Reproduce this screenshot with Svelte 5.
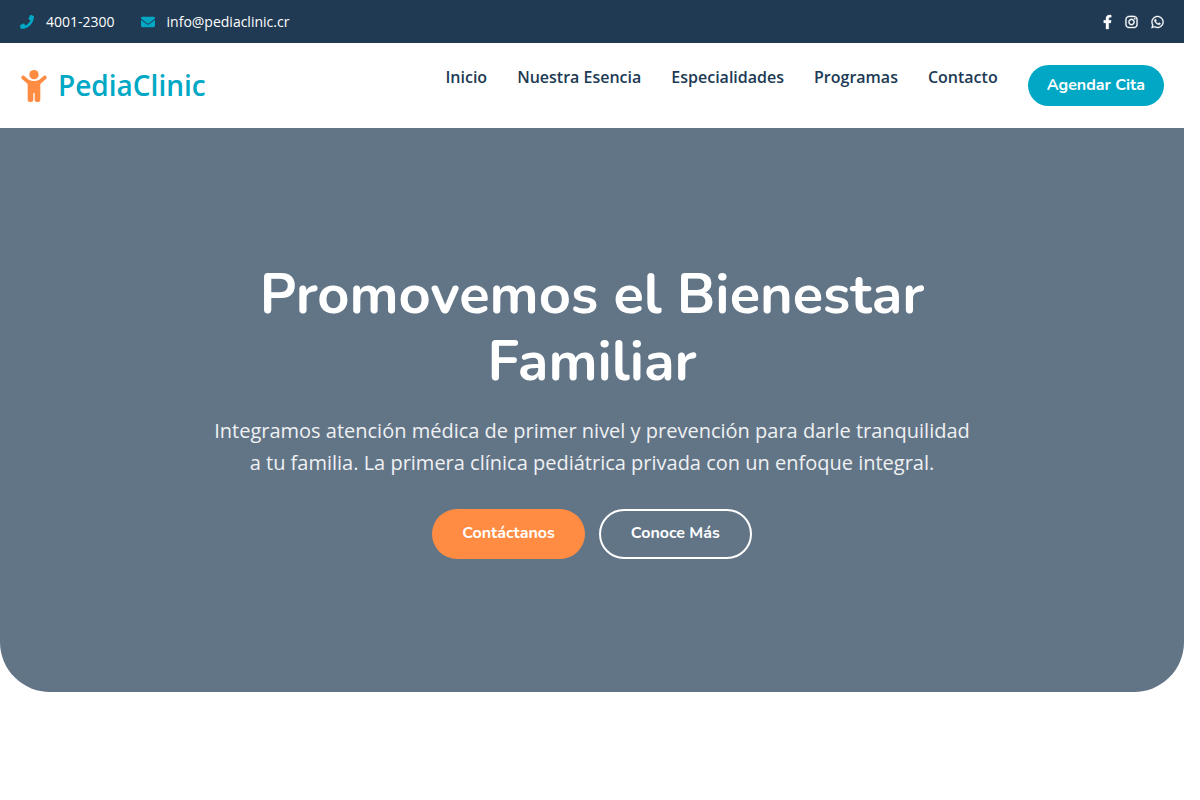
<script>
	const links = ["Inicio", "Nuestra Esencia", "Especialidades", "Programas", "Contacto"];
</script>

<div class="page">
	<div class="topBar">
		<div class="contactInfo">
			<a href="tel:40012300">
				<svg class="accent" viewBox="0 0 512 512" width="14" height="14" aria-hidden="true"><path d="M493.4 24.6l-104-24c-11.3-2.6-22.9 3.3-27.5 13.9l-48 112c-4.2 9.8-1.4 21.3 6.9 28l60.6 49.6c-36 76.7-98.9 140.5-177.2 177.2l-49.6-60.6c-6.8-8.3-18.2-11.1-28-6.9l-112 48C3.9 366.5-2 378.1.6 389.4l24 104C27.1 504.2 36.7 512 48 512c256.1 0 464-207.5 464-464 0-11.2-7.7-20.9-18.6-23.4z" /></svg>
				4001-2300
			</a>
			<a href="mailto:info@pediaclinic.cr">
				<svg class="accent" viewBox="0 0 512 512" width="14" height="14" aria-hidden="true"><path d="M48 64C21.500 64 0 85.500 0 112c0 15.100 7.100 29.300 19.200 38.400L236.800 313.600c11.400 8.500 27 8.500 38.400 0L492.800 150.400c12.100-9.100 19.200-23.300 19.200-38.400c0-26.500-21.500-48-48-48H48zM0 176V384c0 35.300 28.700 64 64 64H448c35.300 0 64-28.700 64-64V176L294.400 339.200c-22.800 17.100-54 17.100-76.800 0L0 176z" /></svg>
				info@pediaclinic.cr
			</a>
		</div>
		<div class="social">
			<a href="#facebook" aria-label="Facebook">
				<svg viewBox="0 0 320 512" width="9" height="14"><path d="M279.140 288l14.220-92.660h-88.910v-60.130c0-25.350 12.420-50.060 52.240-50.060h40.420V6.260S260.430 0 225.360 0c-73.220 0-121.080 44.380-121.080 124.720v70.620H22.890V288h81.390v224h100.170V288z" /></svg>
			</a>
			<a href="#instagram" aria-label="Instagram">
				<svg viewBox="0 0 448 512" width="13" height="14"><path d="M224.100 141c-63.600 0-114.900 51.300-114.900 114.900s51.300 114.900 114.900 114.900S339 319.500 339 255.900 287.700 141 224.100 141zm0 189.600c-41.100 0-74.700-33.500-74.700-74.700s33.500-74.700 74.700-74.700 74.700 33.500 74.700 74.700-33.600 74.700-74.700 74.700zm146.400-194.300c0 14.900-12 26.800-26.800 26.800-14.900 0-26.800-12-26.800-26.800s12-26.800 26.800-26.800 26.800 12 26.800 26.800zm76.100 27.200c-1.700-35.900-9.900-67.700-36.200-93.900-26.200-26.200-58-34.400-93.900-36.200-37-2.100-147.900-2.100-184.900 0-35.800 1.700-67.600 9.900-93.900 36.100s-34.400 58-36.200 93.900c-2.100 37-2.100 147.900 0 184.900 1.700 35.900 9.900 67.700 36.200 93.900s58 34.400 93.900 36.200c37 2.100 147.900 2.100 184.900 0 35.900-1.700 67.700-9.900 93.900-36.200 26.200-26.200 34.400-58 36.200-93.900 2.100-37 2.100-147.800 0-184.800zM398.800 388c-7.800 19.600-22.900 34.700-42.600 42.600-29.500 11.700-99.500 9-132.100 9s-102.700 2.600-132.100-9c-19.600-7.800-34.700-22.900-42.600-42.600-11.700-29.500-9-99.500-9-132.100s-2.600-102.700 9-132.100c7.800-19.600 22.900-34.700 42.600-42.600 29.500-11.700 99.500-9 132.100-9s102.700-2.600 132.100 9c19.600 7.800 34.700 22.900 42.600 42.600 11.700 29.500 9 99.500 9 132.100s2.700 102.700-9 132.100z" /></svg>
			</a>
			<a href="#whatsapp" aria-label="WhatsApp">
				<svg viewBox="0 0 448 512" width="13" height="14"><path d="M380.900 97.100C339 55.100 283.200 32 223.900 32c-122.400 0-222 99.600-222 222 0 39.100 10.200 77.300 29.600 111L0 480l117.700-30.900c32.400 17.700 68.900 27 106.100 27h.1c122.300 0 224.100-99.600 224.100-222 0-59.300-25.200-115-67.100-157zm-157 341.600c-33.200 0-65.700-8.900-94-25.700l-6.700-4-69.800 18.300L72 359.200l-4.400-7c-18.500-29.400-28.200-63.300-28.200-98.200 0-101.700 82.800-184.500 184.600-184.500 49.300 0 95.600 19.200 130.400 54.100 34.800 34.900 56.200 81.200 56.100 130.500 0 101.800-84.900 184.600-186.600 184.600zm101.200-138.200c-5.500-2.800-32.800-16.200-37.900-18-5.100-1.900-8.800-2.800-12.500 2.800-3.700 5.600-14.300 18-17.600 21.800-3.200 3.700-6.500 4.200-12 1.400-32.600-16.300-54-29.100-75.500-66-5.700-9.800 5.700-9.100 16.300-30.300 1.800-3.700.9-6.900-.5-9.700-1.400-2.800-12.500-30.100-17.100-41.200-4.500-10.800-9.100-9.300-12.500-9.500-3.200-.2-6.900-.2-10.600-.2-3.700 0-9.700 1.400-14.800 6.900-5.100 5.600-19.400 19-19.400 46.300 0 27.300 19.900 53.700 22.600 57.400 2.800 3.700 39.100 59.700 94.800 83.800 35.200 15.200 49 16.500 66.600 13.900 10.700-1.600 32.800-13.400 37.400-26.400 4.600-13 4.600-24.100 3.200-26.400-1.300-2.500-5-3.900-10.500-6.600z" /></svg>
			</a>
		</div>
	</div>

	<header>
		<a class="logo" href="#inicio">
			<svg viewBox="-4 0 84 96" width="28" height="32" aria-hidden="true">
				<circle cx="38" cy="14" r="14" />
				<path d="M9 18C5 15 0 18 0 23c0 2 1 4 3 5l16 14v48c0 3 3 6 7 6h3c4 0 7-3 7-6V69h4v21c0 3 3 6 7 6h3c4 0 7-3 7-6V42l16-14c2-1 3-3 3-5 0-5-5-8-9-5L54 29c-10 5-22 5-32 0z" />
			</svg>
			PediaClinic
		</a>
		<nav>
			{#each links as link}
				<a href="#{link.toLowerCase().replace(' ', '-')}">{link}</a>
			{/each}
			<button class="appointment">Agendar Cita</button>
		</nav>
	</header>

	<section class="hero">
		<h1>Promovemos el Bienestar Familiar</h1>
		<p>Integramos atención médica de primer nivel y prevención para darle tranquilidad a tu familia. La primera clínica pediátrica privada con un enfoque integral.</p>
		<div class="actions">
			<button class="primary">Contáctanos</button>
			<button class="outline">Conoce Más</button>
		</div>
	</section>
</div>

<style>
	:global(body) {
		background: #fff;
	}

	.page {
		padding-right: 16px;
		font-family: "Open Sans", sans-serif;
		font-size: 16px;
		line-height: 25px;
		color: #203a54;
	}

	a {
		color: inherit;
		text-decoration: none;
	}

	svg {
		fill: currentColor;
		flex: none;
	}

	.topBar {
		display: flex;
		justify-content: space-between;
		padding: 10px 20px;
		background: #203a54;
		color: #fff;
		font-size: 14px;
		line-height: 23px;
	}

	.contactInfo {
		display: flex;
		gap: 26px;
	}

	.contactInfo a {
		display: flex;
		align-items: center;
		gap: 12px;
	}

	.social {
		display: flex;
		gap: 13px;
	}

	.social a {
		display: flex;
		align-items: center;
	}

	.social svg {
		overflow: visible;
		stroke: currentColor;
		stroke-width: 12;
	}

	.accent {
		color: #00a8c6;
	}

	header {
		display: flex;
		justify-content: space-between;
		align-items: center;
		padding: 20px;
		background: #fff;
	}

	.logo {
		display: flex;
		align-items: center;
		gap: 10px;
		font-size: 28px;
		line-height: 45px;
		font-weight: 600;
		color: #00a8c6;
	}

	.logo svg {
		color: #ff8c42;
	}

	nav {
		display: flex;
		align-items: flex-start;
		gap: 30px;
		font-weight: 600;
	}

	button {
		border: none;
		border-radius: 50px;
		font-family: Nunito, "Open Sans", sans-serif;
		font-size: 16px;
		line-height: 25px;
		font-weight: 700;
		color: #fff;
		cursor: pointer;
	}

	.appointment {
		padding: 8px 19px;
		background: #00a8c6;
	}

	.hero {
		display: flex;
		flex-direction: column;
		align-items: center;
		padding: 133px 20px;
		border-radius: 0 0 50px 50px;
		background: #627587;
		color: #fff;
		text-align: center;
	}

	h1 {
		max-width: 800px;
		margin: 0 0 20px;
		font-family: Nunito, "Open Sans", sans-serif;
		font-size: 56px;
		line-height: 67px;
		font-weight: 700;
	}

	p {
		max-width: 760px;
		margin: 0 0 30px;
		font-size: 20px;
		line-height: 32px;
		opacity: 0.9;
	}

	.actions {
		display: flex;
		gap: 14px;
	}

	.primary {
		padding: 12px 30px 13px;
		background: #ff8c42;
	}

	.outline {
		padding: 10px 30px 11px;
		border: 2px solid #fff;
		background: transparent;
	}

	@media (max-width: 900px) {
		header {
			flex-direction: column;
			gap: 20px;
		}

		nav {
			flex-wrap: wrap;
			justify-content: center;
		}
	}
</style>
